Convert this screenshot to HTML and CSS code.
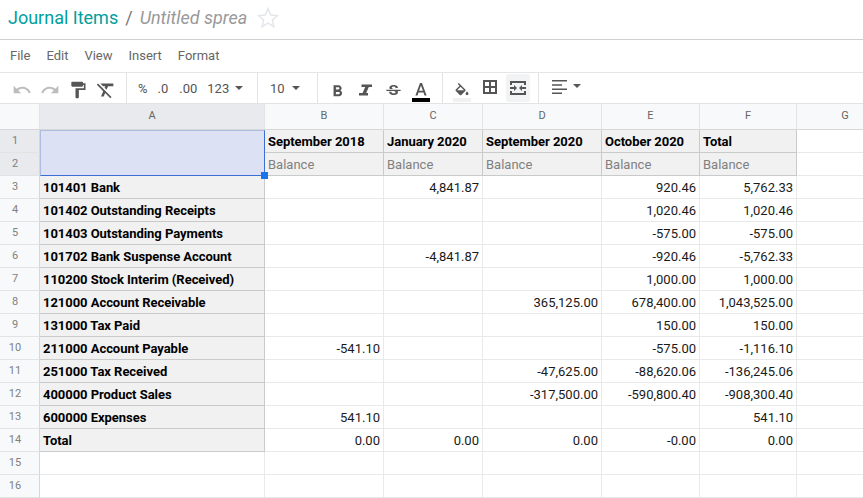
FILE: index.html
```html
<!DOCTYPE html>
<html lang="en">
<head>
<meta charset="utf-8">
<title>Journal Items</title>
<link rel="stylesheet" href="styles.css">
</head>
<body>
<header class="titlebar">
  <span class="crumb">Journal Items</span>
  <span class="slash">/</span>
  <span class="docname">Untitled sprea</span>
  <svg class="star" width="22" height="21" viewBox="0 0 24 23"><path d="M12 1.800l3 7 7.500.6-5.700 4.900 1.700 7.300-6.500-3.900-6.500 3.900 1.700-7.300L1.500 9.400l7.500-.6z" fill="none" stroke="#e3e6ea" stroke-width="1.600"/></svg>
</header>
<nav class="menubar">
  <span>File</span><span>Edit</span><span>View</span><span>Insert</span><span>Format</span>
</nav>
<div class="toolbar">
  <div class="tgroup g-history">
    <span class="tool drop-2"><svg width="20" height="20" viewBox="0 0 24 24"><path d="M12.500 8c-2.650 0-5.050.99-6.900 2.600L2 7v9h9l-3.620-3.620c1.390-1.160 3.160-1.880 5.120-1.880 3.540 0 6.550 2.310 7.600 5.500l2.370-.78C21.080 11.030 17.150 8 12.500 8z" fill="#bdbdbd"/></svg></span>
    <span class="tool drop-2"><svg width="20" height="20" viewBox="0 0 24 24"><path d="M18.400 10.600C16.550 8.990 14.150 8 11.500 8c-4.650 0-8.580 3.030-9.960 7.220l2.360.78c1.050-3.190 4.050-5.500 7.600-5.500 1.950 0 3.730.72 5.120 1.880L13 16h9V7l-3.600 3.600z" fill="#bdbdbd"/></svg></span>
    <span class="tool drop-1"><svg width="20" height="20" viewBox="0 0 24 24"><path d="M18 4V3c0-.55-.45-1-1-1H5c-.55 0-1 .45-1 1v4c0 .55.45 1 1 1h12c.55 0 1-.45 1-1V6h1v4H9v11c0 .55.45 1 1 1h2c.55 0 1-.45 1-1v-9h8V4h-3z" fill="#555"/></svg></span>
    <span class="tool drop-1"><svg width="22" height="22" viewBox="0 0 24 24"><path d="M3.270 5L2 6.270l6.970 6.970L6.500 19h3l1.570-3.660L16.730 21 18 19.730 3.550 5.270 3.270 5zM6 5v.18L8.820 8h2.400l-.72 1.680 2.100 2.100L14.210 8H20V5H6z" fill="#555"/></svg></span>
  </div>
  <div class="tgroup g-format">
    <span class="tx">%</span><span class="tx">.0</span><span class="tx t00">.00</span><span class="tx">123</span><i class="caret"></i>
  </div>
  <div class="tgroup g-size">
    <span class="tx">10</span><i class="caret"></i>
  </div>
  <div class="tgroup g-style">
    <span class="tool drop-3"><svg width="19" height="19" viewBox="0 0 24 24"><path d="M15.600 10.790c.97-.67 1.650-1.770 1.650-2.790 0-2.260-1.750-4-4-4H7v14h7.040c2.090 0 3.710-1.700 3.710-3.790 0-1.520-.86-2.820-2.150-3.420zM10 6.500h3c.83 0 1.500.67 1.500 1.500s-.67 1.500-1.500 1.500h-3v-3zm3.500 9H10v-3h3.500c.83 0 1.500.67 1.500 1.500s-.67 1.500-1.500 1.500z" fill="#555"/></svg></span>
    <span class="tool"><svg width="18" height="18" viewBox="0 0 18 18"><path d="M5.500 5.500H16V8h-3.200l-2.600 6H12v2.500H3V14h3.600l2.600-6H5.500z" fill="#555"/></svg></span>
    <span class="tool drop-3"><svg width="19" height="16" viewBox="0 0 24 24" preserveAspectRatio="none"><path d="M7.240 8.750c-.26-.48-.39-1.030-.39-1.670 0-.61.13-1.160.4-1.670.26-.5.63-.93 1.110-1.290.48-.35 1.050-.63 1.700-.83.66-.19 1.390-.29 2.180-.29.81 0 1.540.11 2.210.34.66.22 1.230.54 1.690.94.47.4.83.88 1.080 1.430.25.55.38 1.150.38 1.810h-3.010c0-.31-.05-.59-.15-.85-.09-.27-.24-.49-.44-.68-.2-.19-.45-.33-.75-.44-.3-.1-.66-.16-1.060-.16-.39 0-.74.04-1.030.13-.29.09-.53.21-.72.36-.19.16-.34.34-.44.55-.1.21-.15.43-.15.66 0 .48.25.88.74 1.210.38.25.77.48 1.410.7H7.390c-.05-.08-.11-.17-.15-.25zM21 12v-2H3v2h9.620c.18.07.4.14.55.2.37.17.66.34.87.51.21.17.35.36.43.57.07.2.11.43.11.69 0 .23-.05.45-.14.66-.09.2-.23.38-.42.53-.19.15-.42.26-.71.35-.29.08-.63.13-1.010.13-.43 0-.83-.04-1.180-.13s-.66-.23-.91-.42c-.25-.19-.45-.44-.59-.75-.14-.31-.25-.76-.25-1.210H6.400c0 .55.08 1.130.24 1.580.16.45.37.85.65 1.210.28.35.6.66.98.92.37.26.78.48 1.220.65.44.17.9.3 1.380.39.48.08.96.13 1.440.13.8 0 1.530-.09 2.180-.28s1.210-.45 1.670-.79c.46-.34.82-.77 1.070-1.270s.38-1.070.38-1.710c0-.6-.1-1.140-.31-1.610-.05-.11-.11-.23-.17-.33H21z" fill="#555"/></svg></span>
    <span class="tool"><span class="colorbtn"><svg width="18" height="13" viewBox="0 0 18 13"><path d="M8 0h2l4.600 12.500h-2.100l-1-3H6.500l-1 3H3.400zM7.100 7.700h3.800L9 2.600z" fill="#555"/></svg><i class="swatch"></i></span></span>
  </div>
  <div class="tgroup g-fill">
    <span class="tool"><span class="colorbtn"><svg width="18" height="13" viewBox="0 0 24 18"><path d="M16.560 8.940L7.620 0 6.210 1.410l2.380 2.380-5.150 5.150c-.59.59-.59 1.540 0 2.120l5.500 5.500c.29.29.68.44 1.060.44s.77-.15 1.060-.44l5.500-5.500c.59-.58.59-1.530 0-2.120zM5.210 10L10 5.210 14.790 10H5.210zM19 11.500s-2 2.170-2 3.500c0 1.100.9 2 2 2s2-.9 2-2c0-1.330-2-3.500-2-3.500z" fill="#555"/></svg><i class="swatch swatch-fill"></i></span></span>
    <span class="tool lift"><svg width="14" height="14" viewBox="0 0 14 14"><path d="M0 0h14v14H0zM2 2v4h4V2zM8 2v4h4V2zM2 8v4h4V8zM8 8v4h4V8z" fill="#555" fill-rule="evenodd"/></svg></span>
    <span class="tool"><span class="active"><svg width="16" height="14" viewBox="0 0 16 14"><path d="M0 0h16v4h-2V2H2v2H0zM0 10h2v2h12v-2h2v4H0zM0 6h4v2H0zM4 4l3 3-3 3zM12 6h4v2h-4zM12 4L9 7l3 3z" fill="#555"/></svg></span></span>
  </div>
  <div class="tgroup g-align">
    <span class="tool lift nudge"><svg width="15" height="14" viewBox="0 0 15 14"><path d="M0 0h15v1.500H0zM0 4.200h10v1.500H0zM0 8.400h15v1.500H0zM0 12.500h10V14H0z" fill="#555"/></svg></span>
    <i class="caret caret-up"></i>
  </div>
</div>
<main class="sheet">
  <table class="grid">
    <colgroup>
      <col class="c-head"><col class="c-a"><col class="c-b"><col class="c-c"><col class="c-d"><col class="c-e"><col class="c-f"><col class="c-g">
    </colgroup>
    <thead>
      <tr>
        <th class="corner"></th><th class="sel-col">A</th><th>B</th><th>C</th><th>D</th><th>E</th><th>F</th><th>G</th>
      </tr>
    </thead>
    <tbody>
      <tr>
        <th class="sel-row">1</th><td class="selected" rowspan="2"><i class="handle"></i></td>
        <td class="hd">September 2018</td><td class="hd">January 2020</td><td class="hd">September 2020</td><td class="hd">October 2020</td><td class="hd">Total</td><td></td>
      </tr>
      <tr>
        <th class="sel-row">2</th>
        <td class="sub">Balance</td><td class="sub">Balance</td><td class="sub">Balance</td><td class="sub">Balance</td><td class="sub">Balance</td><td></td>
      </tr>
      <tr><th>3</th><td class="acc">101401 Bank</td><td></td><td>4,841.87</td><td></td><td>920.46</td><td>5,762.33</td><td></td></tr>
      <tr><th>4</th><td class="acc">101402 Outstanding Receipts</td><td></td><td></td><td></td><td>1,020.46</td><td>1,020.46</td><td></td></tr>
      <tr><th>5</th><td class="acc">101403 Outstanding Payments</td><td></td><td></td><td></td><td>-575.00</td><td>-575.00</td><td></td></tr>
      <tr><th>6</th><td class="acc">101702 Bank Suspense Account</td><td></td><td>-4,841.87</td><td></td><td>-920.46</td><td>-5,762.33</td><td></td></tr>
      <tr><th>7</th><td class="acc">110200 Stock Interim (Received)</td><td></td><td></td><td></td><td>1,000.00</td><td>1,000.00</td><td></td></tr>
      <tr><th>8</th><td class="acc">121000 Account Receivable</td><td></td><td></td><td>365,125.00</td><td>678,400.00</td><td>1,043,525.00</td><td></td></tr>
      <tr><th>9</th><td class="acc">131000 Tax Paid</td><td></td><td></td><td></td><td>150.00</td><td>150.00</td><td></td></tr>
      <tr><th>10</th><td class="acc">211000 Account Payable</td><td>-541.10</td><td></td><td></td><td>-575.00</td><td>-1,116.10</td><td></td></tr>
      <tr><th>11</th><td class="acc">251000 Tax Received</td><td></td><td></td><td>-47,625.00</td><td>-88,620.06</td><td>-136,245.06</td><td></td></tr>
      <tr><th>12</th><td class="acc">400000 Product Sales</td><td></td><td></td><td>-317,500.00</td><td>-590,800.40</td><td>-908,300.40</td><td></td></tr>
      <tr><th>13</th><td class="acc">600000 Expenses</td><td>541.10</td><td></td><td></td><td></td><td>541.10</td><td></td></tr>
      <tr><th>14</th><td class="acc">Total</td><td>0.00</td><td>0.00</td><td>0.00</td><td>-0.00</td><td>0.00</td><td></td></tr>
      <tr><th>15</th><td></td><td></td><td></td><td></td><td></td><td></td><td></td></tr>
      <tr><th>16</th><td></td><td></td><td></td><td></td><td></td><td></td><td></td></tr>
    </tbody>
  </table>
</main>
</body>
</html>
```
FILE: styles.css
```css
* { box-sizing: border-box; }
html, body { margin: 0; padding: 0; }
body {
  width: 863px;
  height: 498px;
  overflow: hidden;
  background: #fff;
  font-family: Roboto, "Liberation Sans", sans-serif;
  color: #000;
}
.titlebar {
  height: 40px;
  border-bottom: 1px solid #d0d0d0;
  display: flex;
  align-items: center;
  padding: 0 0 4px 8px;
  font-size: 18px;
  line-height: 20px;
}
.crumb { color: #00a09d; }
.slash { color: #777; margin-left: 7px; }
.docname { color: #999; font-style: italic; margin-left: 7px; }
.star { margin-left: 10px; }
.menubar {
  height: 33px;
  border-bottom: 1px solid #e5e5e5;
  display: flex;
  align-items: center;
  gap: 16px;
  padding: 0 0 2px 10px;
  font-size: 13px;
  color: #666;
}
.toolbar {
  height: 31px;
  border-bottom: 1px solid #e2e3e3;
  display: flex;
  align-items: stretch;
}
.tgroup {
  display: flex;
  align-items: center;
  border-right: 1px solid #e2e3e3;
  font-size: 13px;
  color: #555;
}
.tool {
  flex: none;
  width: 28px;
  height: 30px;
  display: flex;
  align-items: center;
  justify-content: center;
}
.lift { padding-bottom: 3px; }
.nudge { padding-left: 2px; }
.drop-1 { padding-top: 3px; }
.drop-2 { padding-top: 4px; }
.drop-3 { padding-top: 6px; }
.g-history { width: 127px; padding-left: 8px; }
.g-format { width: 131px; padding-left: 11px; gap: 10px; }
.t00 { margin-left: 1px; }
.g-size { width: 60px; padding-left: 12px; gap: 7px; }
.g-style { width: 125px; padding-left: 5px; }
.g-fill { width: 96px; padding-left: 5px; }
.g-align { padding-left: 5px; border-right: 0; }
.caret {
  display: block;
  width: 0;
  height: 0;
  border-left: 4px solid transparent;
  border-right: 4px solid transparent;
  border-top: 4px solid #555;
  margin-left: -4px;
}
.g-size .caret { margin-left: 0; }
.caret-up { margin: -4px 0 0 1px; }
.colorbtn {
  display: flex;
  flex-direction: column;
  width: 18px;
  height: 19px;
  gap: 2px;
  margin-top: 8px;
}
.swatch { display: block; height: 4px; width: 18px; background: #000; }
.swatch-fill { background: #f1f1f1; }
.active {
  width: 24px;
  height: 28px;
  background: #f1f3f4;
  border-radius: 2px;
  display: flex;
  align-items: center;
  justify-content: center;
}
.grid {
  table-layout: fixed;
  border-collapse: separate;
  border-spacing: 0;
  width: 894px;
  font-size: 13px;
}
.c-head { width: 40px; }
.c-a { width: 225px; }
.c-b { width: 119px; }
.c-c { width: 99px; }
.c-d { width: 119px; }
.c-e { width: 98px; }
.c-f { width: 97px; }
.c-g { width: 97px; }
thead th {
  height: 26px;
  background: #f8f9fa;
  border-right: 1px solid #e2e3e3;
  border-bottom: 1px solid #d6d7d8;
  font-size: 11px;
  font-weight: 400;
  color: #666;
  text-align: center;
  padding: 0 0 2px;
}
thead th.sel-col { background: #e8eaed; }
tbody th {
  height: 23px;
  background: #f8f9fa;
  border-right: 1px solid #d6d7d8;
  border-bottom: 1px solid #e2e3e3;
  font-size: 11px;
  font-weight: 400;
  color: #808080;
  text-align: center;
  padding: 0 9px 2px 0;
}
tbody th.sel-row { background: #e8eaed; }
td {
  height: 23px;
  padding: 0 3px 0 2px;
  border-right: 1px solid #e8e9e9;
  border-bottom: 1px solid #e8e9e9;
  text-align: right;
  white-space: nowrap;
  overflow: hidden;
  color: #1a1a1a;
}
td.acc, td.hd, td.sub {
  background: #f1f1f1;
  text-align: left;
  border-right-color: #c9caca;
  border-bottom-color: #c9caca;
  padding-left: 3px;
}
td.acc, td.hd { font-weight: 700; color: #000; letter-spacing: -0.04px; }
td.sub { color: #808080; }
td.selected {
  position: relative;
  overflow: visible;
  background: #dce2f3;
  border: 1px solid #aebcdf;
  border-right-color: #3b6fd6;
  border-bottom-color: #3b6fd6;
}
.handle {
  position: absolute;
  right: -4px;
  bottom: -4px;
  width: 7px;
  height: 7px;
  background: #1a73e8;
}
```
